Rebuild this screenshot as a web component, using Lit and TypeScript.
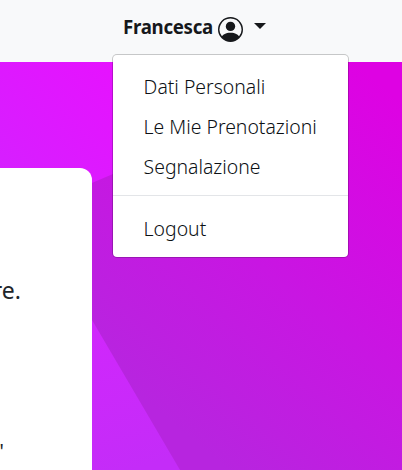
import { LitElement, html, css } from "lit";
import { customElement, property } from "lit/decorators.js";

@customElement("user-menu")
class UserMenu extends LitElement {
  @property() name = "Francesca";
  private items = ["Dati Personali", "Le Mie Prenotazioni", "Segnalazione"];

  static styles = css`
    :host { display: block; position: relative; }
    .toggle { display: flex; align-items: flex-start; height: 30px; color: #16181b; }
    .name { font-weight: 700; font-size: 18.7px; line-height: 30px; white-space: nowrap; width: 95px; letter-spacing: -0.3px; }
    .avatar { width: 25px; height: 25px; margin-top: 5px; display: block; }
    .caret { margin: 11px 0 0 11px; border: 6px solid transparent; border-top-color: currentColor; border-bottom: 0; }
    .menu {
      position: absolute; left: -11px; top: 42px; width: 237px; height: 204px;
      box-sizing: border-box; padding: 11px 0; background: #fff; background-clip: padding-box;
      border: 1px solid rgba(0, 0, 0, 0.2); border-radius: 5px;
    }
    .item { height: 40px; line-height: 41px; padding-left: 30.6px; font-size: 19.4px; font-weight: 350; color: #0c1014; white-space: nowrap; }
    .divider { height: 1px; background: #e3e5e8; margin: 9px 0 12px; }
  `;

  render() {
    return html`
      <div class="toggle">
        <span class="name">${this.name}</span>
        <svg class="avatar" viewBox="0 0 16 16" fill="currentColor">
          <path d="M11 6a3 3 0 1 1-6 0 3 3 0 0 1 6 0z" />
          <path fill-rule="evenodd" d="M0 8a8 8 0 1 1 16 0A8 8 0 0 1 0 8zm8-7a7 7 0 0 0-5.468 11.37C3.242 11.226 4.805 10 8 10s4.757 1.225 5.468 2.37A7 7 0 0 0 8 1z" />
        </svg>
        <span class="caret"></span>
      </div>
      <div class="menu">
        ${this.items.map((t) => html`<div class="item">${t}</div>`)}
        <div class="divider"></div>
        <div class="item">Logout</div>
      </div>
    `;
  }
}

@customElement("app-root")
class AppRoot extends LitElement {
  static styles = css`
    :host {
      display: flex; flex-direction: column; width: 402px; height: 470px; overflow: hidden;
      font-family: "Noto Sans", "Open Sans", sans-serif; color: #212529;
    }
    .bar { height: 62px; flex: none; box-sizing: border-box; padding: 12px 0 0 123px; background: #f8f9fa; position: relative; z-index: 1; }
    .hero { flex: 1; display: grid; grid-template: 408px / 402px; }
    .backdrop { grid-area: 1 / 1; width: 402px; height: 408px; display: block; }
    .card {
      grid-area: 1 / 1; z-index: 0; margin-top: 106px; width: 92px; box-sizing: border-box;
      background: #fff; border-radius: 0 12px 0 0; overflow: hidden;
      display: flex; flex-direction: column; align-items: flex-start;
    }
    .line { width: 21px; margin-top: 105px; height: 34px; line-height: 34px; font-size: 23px; display: flex; justify-content: flex-end; }
    .quote { width: 4px; margin-top: 127px; height: 34px; line-height: 34px; font-size: 20px; display: flex; justify-content: flex-end; }
  `;

  render() {
    return html`
      <header class="bar"><user-menu></user-menu></header>
      <main class="hero">
        <svg class="backdrop" viewBox="0 62 402 408">
          <defs>
            <linearGradient id="top" gradientUnits="userSpaceOnUse" x1="0" y1="170" x2="110" y2="62">
              <stop offset="0" stop-color="#d61fff" /><stop offset="1" stop-color="#e612ff" />
            </linearGradient>
            <linearGradient id="deep" gradientUnits="userSpaceOnUse" x1="145" y1="400" x2="400" y2="100">
              <stop offset="0" stop-color="#b725df" /><stop offset="0.45" stop-color="#c816e2" /><stop offset="1" stop-color="#de02e3" />
            </linearGradient>
            <linearGradient id="low" gradientUnits="userSpaceOnUse" x1="95" y1="330" x2="130" y2="470">
              <stop offset="0" stop-color="#d027fc" /><stop offset="1" stop-color="#c42cf8" />
            </linearGradient>
          </defs>
          <rect y="62" width="402" height="408" fill="url(#top)" />
          <path d="M80 188L113 174L346 62H402V470H80Z" fill="url(#deep)" />
          <path d="M80 300L92 320L180 470H80Z" fill="url(#low)" />
        </svg>
        <section class="card">
          <div class="line">re.</div>
          <div class="quote">"</div>
        </section>
      </main>
    `;
  }
}
